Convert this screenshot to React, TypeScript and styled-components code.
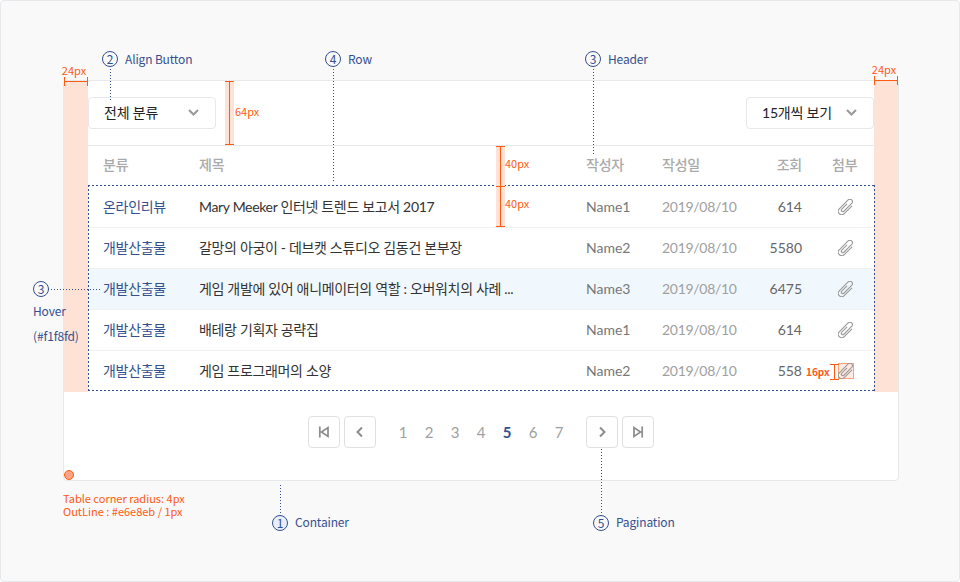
import React from 'react';
import styled, { createGlobalStyle } from 'styled-components';

const ORANGE = '#ff5a12';
const PEACH = '#ffe2d6';
const NAVY = '#34508f';
const TABLE_FONT = `Lato, "Noto Sans CJK KR", sans-serif`;
const NOTE_FONT = `"Noto Sans CJK KR", sans-serif`;

const dots = (dir: string, period: number) => {
  const on = Math.floor(period / 2);
  return `repeating-linear-gradient(to ${dir}, ${NAVY} 0 ${on}px, transparent ${on}px ${period}px)`;
};

const GlobalStyle = createGlobalStyle`
  html, body { margin: 0; padding: 0; background: #fff; }
  body { font-family: ${TABLE_FONT}; }
  * { box-sizing: border-box; }
`;

const Frame = styled.div`
  position: relative;
  width: 960px;
  height: 582px;
  padding: 79px 60px 100px 62px;
  background: #f9f9f9;
  border: 1px solid #e6e8eb;
  border-radius: 4px;
`;

const Container = styled.section`
  position: relative;
  height: 401px;
  background: #fff;
  border: 1px solid #e6e8eb;
  border-radius: 4px;
`;

const Body = styled.div`
  display: flex;
`;

const Gutter = styled.div`
  position: relative;
  flex: 0 0 24px;
  background: ${PEACH};
`;

const Main = styled.div`
  flex: 1;
  min-width: 0;
`;

const Toolbar = styled.div`
  display: flex;
  align-items: center;
  height: 65px;
  border-bottom: 1px solid #e6e8eb;
`;

const SelectButton = styled.button`
  display: flex;
  align-items: center;
  justify-content: space-between;
  width: 128px;
  height: 32px;
  padding: 0 16px 2px 15px;
  background: #fff;
  border: 1px solid #e6e8eb;
  border-radius: 4px;
  color: #222;
  font-family: ${TABLE_FONT};
  font-size: 14px;
  letter-spacing: -0.2px;
`;

const Spacer = styled.div`
  flex: 1;
`;

const ToolbarMeasure = styled.div`
  display: flex;
  align-items: center;
  gap: 1px;
  align-self: flex-start;
  height: 64px;
  margin-left: 9px;
`;

const columns = '96px 387px 76px 100px 40px 1fr';

const HeaderRow = styled.div`
  display: grid;
  grid-template-columns: ${columns};
  align-items: center;
  height: 41px;
  padding: 0 0 5px 15px;
  color: #aaa;
  font-size: 14px;
  font-weight: 500;
  letter-spacing: -0.2px;
`;

const ViewsHead = styled.span`
  text-align: right;
`;

const AttachHead = styled.span`
  padding-left: 30px;
  white-space: nowrap;
`;

const Row = styled.div<{ $hover?: boolean }>`
  display: grid;
  grid-template-columns: ${columns};
  align-items: center;
  height: 41px;
  padding: 0 0 2px 15px;
  font-size: 14px;
  background: ${({ $hover }) => ($hover ? '#f1f8fd' : 'transparent')};
  border-bottom: 1px solid #f0f0f0;
  &:last-child {
    border-bottom: 0;
    padding-bottom: 3px;
  }
`;

const Category = styled.span`
  color: ${NAVY};
  letter-spacing: -0.3px;
`;

const Title = styled.span`
  color: #333;
  letter-spacing: -0.33px;
  white-space: nowrap;
`;

const Author = styled.span`
  color: #777;
`;

const DateText = styled.span`
  color: #a0a0a0;
  letter-spacing: -0.3px;
`;

const Views = styled.span`
  color: #666;
  text-align: right;
  white-space: nowrap;
`;

const AttachCell = styled.span`
  display: flex;
  padding: 2px 0 0 36px;
`;

const AttachIcon = styled.span<{ $marked?: boolean }>`
  display: flex;
  width: 16px;
  height: 16px;
  ${({ $marked }) =>
    $marked && `background: rgba(255, 90, 18, 0.12); box-shadow: inset 0 0 0 1px rgba(255, 90, 18, 0.5);`}
`;

const Pagination = styled.nav`
  display: flex;
  align-items: center;
  justify-content: center;
  gap: 4px;
  height: 80px;
`;

const PageButton = styled.button`
  display: flex;
  align-items: center;
  justify-content: center;
  width: 32px;
  height: 32px;
  padding: 0;
  background: #fff;
  border: 1px solid #e0e0e0;
  border-radius: 4px;
`;

const PageList = styled.div`
  display: flex;
  justify-content: center;
  width: 202px;
`;

const PageNumber = styled.span<{ $active?: boolean }>`
  width: 26px;
  text-align: center;
  color: ${({ $active }) => ($active ? NAVY : '#a0a0a0')};
  font-size: 15px;
  font-weight: ${({ $active }) => ($active ? 700 : 400)};
`;

/* annotation layer, drawn over the table */
const Callout = styled.div<{ $x: number; $y: number }>`
  position: absolute;
  left: ${({ $x }) => $x}px;
  top: ${({ $y }) => $y}px;
  display: flex;
  align-items: center;
  gap: 7px;
`;

const HoverCallout = styled.div`
  position: absolute;
  left: 32px;
  top: 280px;
  display: flex;
  flex-direction: column;
  gap: 7px;
`;

const HoverMarkerWrap = styled.div`
  margin-bottom: -2px;
`;

const Marker = styled.span<{
  $down?: number;
  $up?: number;
  $across?: number;
  $fill?: boolean;
}>`
  position: relative;
  display: flex;
  align-items: center;
  justify-content: center;
  width: 16px;
  height: 16px;
  border: 1px solid ${NAVY};
  border-radius: 50%;
  background: ${({ $fill }) => ($fill ? '#e8eef8' : 'transparent')};
  color: ${NAVY};
  font-family: ${NOTE_FONT};
  font-size: 12px;
  line-height: 1;
  &::after {
    content: '';
    position: absolute;
    ${({ $down }) => $down && `top: 100%; left: 7px; width: 1px; height: ${$down}px; background: ${dots('bottom', 3)};`}
    ${({ $up }) => $up && `bottom: 100%; left: 7px; width: 1px; height: ${$up}px; background: ${dots('top', 3)};`}
    ${({ $across }) => $across && `left: 100%; top: 7px; height: 1px; width: ${$across}px; background: ${dots('right', 3)};`}
  }
`;

const Note = styled.span<{ $raise?: boolean }>`
  color: ${NAVY};
  font-family: ${NOTE_FONT};
  font-size: 12px;
  line-height: 18px;
  letter-spacing: -0.15px;
  white-space: nowrap;
  ${({ $raise }) => $raise && 'margin-top: -2px;'}
`;

const RowsOutline = styled.div`
  position: absolute;
  left: 87px;
  top: 184px;
  width: 787px;
  height: 206px;
  background:
    ${dots('right', 4)} left top / 100% 1px no-repeat,
    ${dots('right', 4)} left bottom / 100% 1px no-repeat,
    ${dots('bottom', 4)} left top / 1px 100% no-repeat,
    ${dots('bottom', 4)} right top / 1px 100% no-repeat;
  pointer-events: none;
`;

const VBar = styled.div<{ $h: number; $tint?: boolean }>`
  position: relative;
  flex: 0 0 9px;
  width: 9px;
  height: ${({ $h }) => $h}px;
  background: ${({ $tint }) => ($tint ? PEACH : 'transparent')};
  border-top: 1px solid ${ORANGE};
  border-bottom: 1px solid ${ORANGE};
  &::after {
    content: '';
    position: absolute;
    left: 4px;
    top: 0;
    bottom: 0;
    border-left: 1px solid ${ORANGE};
  }
`;

const MeasureGroup = styled.div<{ $x: number; $y: number; $gap?: number }>`
  position: absolute;
  left: ${({ $x }) => $x}px;
  top: ${({ $y }) => $y}px;
  display: flex;
  align-items: center;
  gap: ${({ $gap }) => $gap ?? 0}px;
`;

const GutterMeasure = styled.div<{ $lift?: number }>`
  position: absolute;
  left: -3px;
  right: -3px;
  bottom: calc(100% - ${({ $lift }) => 5 - ($lift ?? 0)}px);
  display: flex;
  flex-direction: column;
  align-items: center;
`;

const HBar = styled.div`
  position: relative;
  width: 24px;
  height: 9px;
  border-left: 1px solid ${ORANGE};
  border-right: 1px solid ${ORANGE};
  &::after {
    content: '';
    position: absolute;
    left: 0;
    right: 0;
    top: 4px;
    border-top: 1px solid ${ORANGE};
  }
`;

const Spec = styled.span<{ $bold?: boolean; $small?: boolean; $raise?: number }>`
  color: ${ORANGE};
  font-family: ${NOTE_FONT};
  font-size: ${({ $small }) => ($small ? 10 : 11)}px;
  font-weight: ${({ $bold }) => ($bold ? 700 : 400)};
  line-height: 13px;
  white-space: nowrap;
  margin-bottom: ${({ $raise }) => $raise ?? 0}px;
`;

const GutterLabel = styled(Spec)`
  margin-right: 4px;
`;

const SpecNote = styled.div`
  position: absolute;
  left: 62px;
  top: 491px;
  display: flex;
  flex-direction: column;
`;

const CornerDot = styled.div`
  position: absolute;
  left: 0;
  bottom: 0;
  width: 10px;
  height: 10px;
  border-radius: 50%;
  background: #ffa486;
  border: 1px solid ${ORANGE};
`;

const Chevron = () => (
  <svg width="11" height="7" viewBox="0 0 11 7" fill="none">
    <path d="M1 1l4.500 4.500L10 1" stroke="#999" strokeWidth="2" />
  </svg>
);

const PageIcon = ({ d, width = 1.500 }: { d: string; width?: number }) => (
  <svg width="14" height="14" viewBox="0 0 14 14" fill="none">
    <path d={d} stroke="#8c8c8c" strokeWidth={width} />
  </svg>
);

const Clip = () => (
  <svg width="16" height="16" viewBox="0 0 16 16" fill="none">
    <path
      d="M11.500 3V14a3.500 3.500 0 0 1-7 0V1.500a2.500 2.500 0 0 1 5 0V12.500a1.500 1.500 0 0 1-3 0V5"
      stroke="#999"
      strokeWidth="1.100"
      transform="rotate(45 8 8)"
    />
  </svg>
);

const rows = [
  { cat: '온라인리뷰', title: 'Mary Meeker 인터넷 트렌드 보고서 2017', author: 'Name1', views: 614 },
  { cat: '개발산출물', title: '갈망의 아궁이 - 데브캣 스튜디오 김동건 본부장', author: 'Name2', views: 5580 },
  { cat: '개발산출물', title: '게임 개발에 있어 애니메이터의 역할 : 오버워치의 사례 ...', author: 'Name3', views: 6475, hover: true },
  { cat: '개발산출물', title: '배테랑 기획자 공략집', author: 'Name1', views: 614 },
  { cat: '개발산출물', title: '게임 프로그래머의 소양', author: 'Name2', views: 558, marked: true },
];

export default function App() {
  return (
    <>
      <GlobalStyle />
      <Frame>
        <Container>
          <Body>
            <Gutter>
              <GutterMeasure>
                <GutterLabel>24px</GutterLabel>
                <HBar />
              </GutterMeasure>
            </Gutter>
            <Main>
              <Toolbar>
                <SelectButton>
                  전체 분류
                  <Chevron />
                </SelectButton>
                <ToolbarMeasure>
                  <VBar $h={64} $tint />
                  <Spec $raise={4}>64px</Spec>
                </ToolbarMeasure>
                <Spacer />
                <SelectButton>
                  15개씩 보기
                  <Chevron />
                </SelectButton>
              </Toolbar>
              <HeaderRow>
                <span>분류</span>
                <span>제목</span>
                <span>작성자</span>
                <span>작성일</span>
                <ViewsHead>조회</ViewsHead>
                <AttachHead>첨부</AttachHead>
              </HeaderRow>
              {rows.map((row) => (
                <Row key={row.title} $hover={row.hover}>
                  <Category>{row.cat}</Category>
                  <Title>{row.title}</Title>
                  <Author>{row.author}</Author>
                  <DateText>2019/08/10</DateText>
                  <Views>{row.views}</Views>
                  <AttachCell>
                    <AttachIcon $marked={row.marked}>
                      <Clip />
                    </AttachIcon>
                  </AttachCell>
                </Row>
              ))}
            </Main>
            <Gutter>
              <GutterMeasure $lift={1}>
                <GutterLabel>24px</GutterLabel>
                <HBar />
              </GutterMeasure>
            </Gutter>
          </Body>
          <Pagination>
            <PageButton>
              <PageIcon width={1.700} d="M2.800 1.500v11M11 2.500v9L4.500 7z" />
            </PageButton>
            <PageButton>
              <PageIcon width={2} d="M9 2.500L4.500 7 9 11.500" />
            </PageButton>
            <PageList>
              {[1, 2, 3, 4, 5, 6, 7].map((n) => (
                <PageNumber key={n} $active={n === 5}>
                  {n}
                </PageNumber>
              ))}
            </PageList>
            <PageButton>
              <PageIcon width={2} d="M5 2.500L9.500 7 5 11.500" />
            </PageButton>
            <PageButton>
              <PageIcon width={1.700} d="M11.200 1.500v11M3 2.500v9L9.500 7z" />
            </PageButton>
          </Pagination>
          <CornerDot />
        </Container>

        <RowsOutline />

        <MeasureGroup $x={495} $y={145}>
          <VBar $h={41} $tint />
          <Spec $raise={6}>40px</Spec>
        </MeasureGroup>
        <MeasureGroup $x={495} $y={185}>
          <VBar $h={41} $tint />
          <Spec $raise={6}>40px</Spec>
        </MeasureGroup>
        <MeasureGroup $x={805} $y={363} $gap={-2}>
          <Spec $bold $small $raise={2}>16px</Spec>
          <VBar $h={16} />
        </MeasureGroup>
        <SpecNote>
          <Spec>
            Table corner radius: 4px
            <br />
            OutLine : #e6e8eb / 1px
          </Spec>
        </SpecNote>

        <Callout $x={101} $y={49}>
          <Marker $down={34}>2</Marker>
          <Note>Align Button</Note>
        </Callout>
        <Callout $x={324} $y={49}>
          <Marker $down={117}>4</Marker>
          <Note>Row</Note>
        </Callout>
        <Callout $x={584} $y={49}>
          <Marker $down={88}>3</Marker>
          <Note>Header</Note>
        </Callout>
        <HoverCallout>
          <HoverMarkerWrap>
            <Marker $across={54}>3</Marker>
          </HoverMarkerWrap>
          <Note>Hover</Note>
          <Note>(#f1f8fd)</Note>
        </HoverCallout>
        <Callout $x={271} $y={514}>
          <Marker $up={31} $fill>1</Marker>
          <Note $raise>Container</Note>
        </Callout>
        <Callout $x={592} $y={514}>
          <Marker $up={67}>5</Marker>
          <Note $raise>Pagination</Note>
        </Callout>
      </Frame>
    </>
  );
}
